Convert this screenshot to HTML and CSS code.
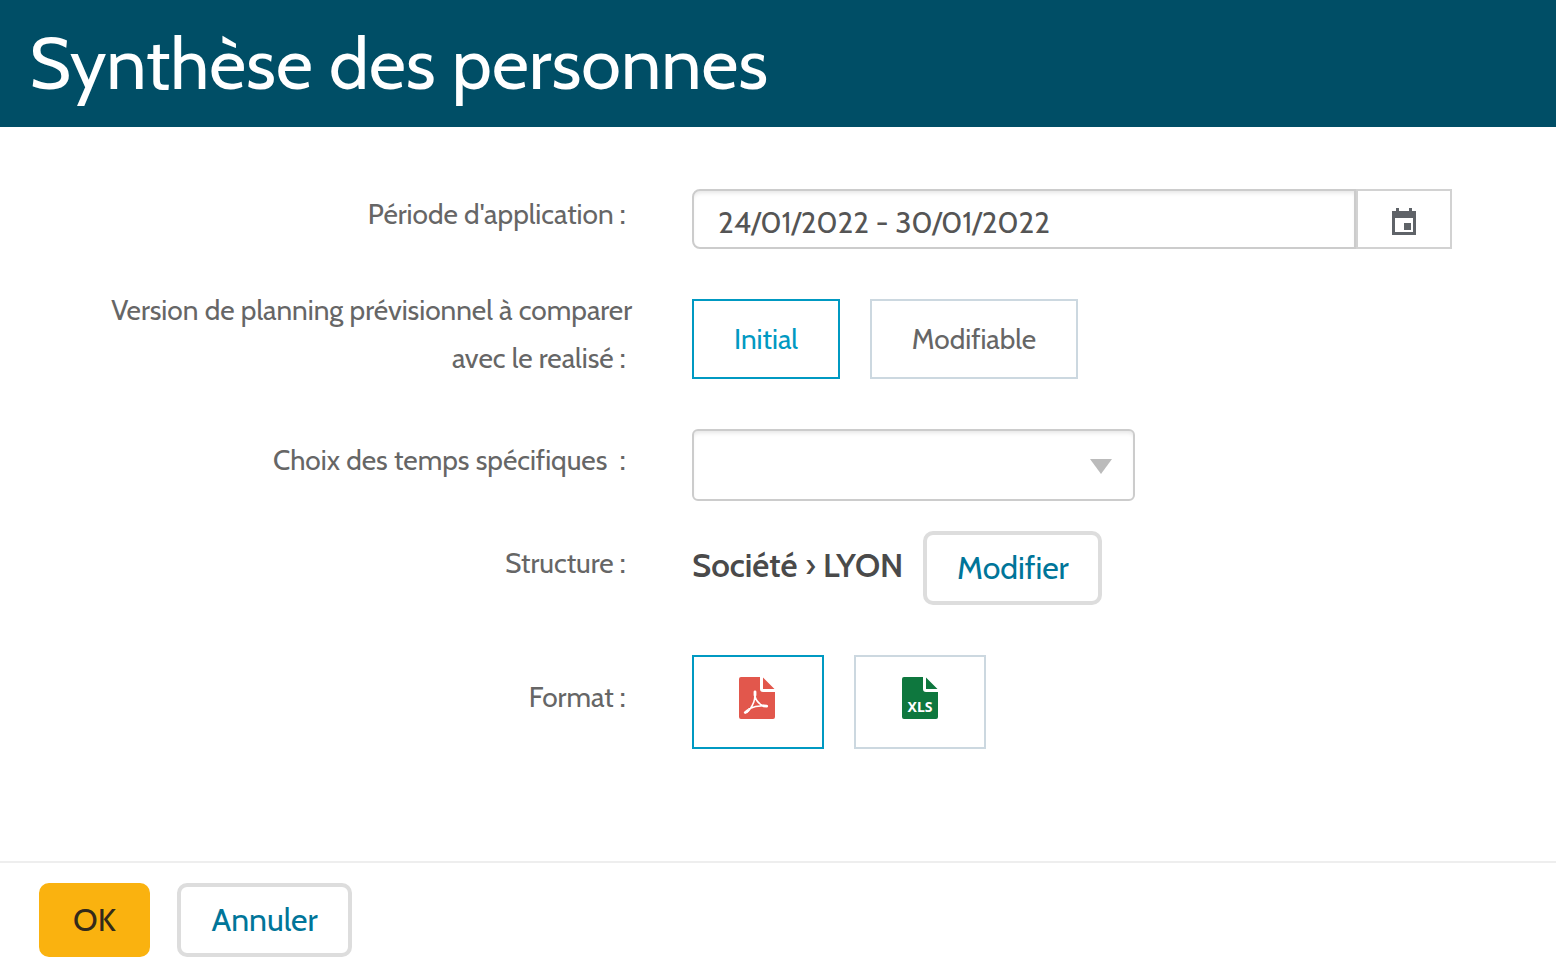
FILE: index.html
```
<!DOCTYPE html>
<html lang="fr">
<head>
<meta charset="utf-8">
<title>Synthèse des personnes</title>
<link rel="stylesheet" href="styles.css">
</head>
<body>
<header class="header"><h1 class="title">Synthèse des personnes</h1></header>
<form class="form">
  <main class="fields">
    <div class="row">
      <label class="label" for="period">Période d'application&nbsp;:&nbsp;</label>
      <div class="period">
        <input class="period-input" id="period" type="text" value="24/01/2022 - 30/01/2022">
        <button class="period-button" type="button" aria-label="Ouvrir le calendrier">
          <svg class="calendar-icon" viewBox="0 0 24 27" aria-hidden="true"><path fill="#5f6368" fill-rule="evenodd" d="M4 0h3v3h10V0h3v3h4v24H0V3h4zM3 10v14h18V10zM12 15h7v7h-7z"/></svg>
        </button>
      </div>
    </div>
    <div class="row row-version" role="radiogroup" aria-labelledby="version-label">
      <span class="label" id="version-label">Version de planning prévisionnel à comparer<br>avec le realisé&nbsp;:&nbsp;</span>
      <div class="choices">
        <label class="choice choice-initial"><input class="radio" type="radio" name="version" checked>Initial</label>
        <label class="choice choice-editable"><input class="radio" type="radio" name="version">Modifiable</label>
      </div>
    </div>
    <div class="row row-times">
      <label class="label" for="times">Choix des temps spécifiques&nbsp;&nbsp;:&nbsp;</label>
      <div class="select-box">
        <select class="select" id="times"><option></option></select>
        <svg class="arrow" viewBox="0 0 22 15" aria-hidden="true"><path fill="#bbb" d="M0 0h22L11 15z"/></svg>
      </div>
    </div>
    <div class="row row-structure">
      <span class="label">Structure&nbsp;:&nbsp;</span>
      <div class="structure">
        <strong class="structure-name">Société <span class="separator">›</span> LYON</strong>
        <button class="button button-edit" type="button">Modifier</button>
      </div>
    </div>
    <div class="row row-format" role="radiogroup" aria-labelledby="format-label">
      <span class="label" id="format-label">Format&nbsp;:&nbsp;</span>
      <div class="choices">
        <label class="choice choice-file choice-pdf"><input class="radio" type="radio" name="format" aria-label="PDF" checked>
          <svg class="file-icon" viewBox="0 0 36 42" aria-hidden="true">
            <path fill="#e2574c" d="M2 0h19v12q0 3 3 3h12v25q0 2-2 2H2q-2 0-2-2V2q0-2 2-2zM24 0.500L35.500 12H24z"/>
            <g fill="none" stroke="#fff" stroke-linejoin="round" stroke-linecap="round">
              <path stroke-width="1.600" d="M16 17c-.2 3 0 5-1.200 8-1.800 4.500-4 8-7 10.500M16 19c.6 3.500 3 6.500 5.500 8.300 1.800 1.200 4 1.700 6 2M10 31.800c4-1.800 9-2.900 14-3"/>
              <path stroke-width="2.800" d="M16 14.800v3.500M24.500 28.800l3.200.4M6.300 35.500l2.500-2"/>
            </g>
          </svg>
        </label>
        <label class="choice choice-file"><input class="radio" type="radio" name="format" aria-label="XLS">
          <svg class="file-icon" viewBox="0 0 36 42" aria-hidden="true">
            <path fill="#0e773e" d="M2 0h19v12q0 3 3 3h12v25q0 2-2 2H2q-2 0-2-2V2q0-2 2-2zM24 0.500L35.500 12H24z"/>
            <text class="file-text" x="18" y="35">XLS</text>
          </svg>
        </label>
      </div>
    </div>
  </main>
  <footer class="footer">
    <button class="button button-ok" type="submit">OK</button>
    <button class="button button-cancel" type="button">Annuler</button>
  </footer>
</form>
</body>
</html>
```
FILE: styles.css
```
* { box-sizing: border-box; }
body {
  margin: 0;
  min-height: 100vh;
  display: flex;
  flex-direction: column;
  background: #fff;
  color: #666;
  font-family: Cabin, Lato, sans-serif;
  font-size: 28px;
  line-height: 48px;
}
button, input, select { font: inherit; }
.header { background: #004e66; padding: 20px 29px 19px; }
.title { margin: 0; color: #fff; font-size: 72px; line-height: 88px; font-weight: 400; }
.form { flex: 1; display: flex; flex-direction: column; }
.fields { flex: 1; padding: 62px 104px 62px 0; }
.row { display: grid; grid-template-columns: 632fr 760fr; column-gap: 60px; align-items: center; }
.row-version { margin-top: 37px; }
.row-times { margin-top: 37px; }
.row-structure { margin-top: 30px; }
.row-format { margin-top: 50px; }
.label { padding-bottom: 10px; text-align: right; }
.period { display: flex; height: 60px; }
.period-input {
  flex: 1;
  min-width: 0;
  padding: 8px 24px 0;
  border: 2px solid #ccc;
  border-radius: 8px 0 0 8px;
  box-shadow: inset 0 4px 4px -2px rgba(0, 0, 0, 0.1);
  color: #555;
  font-size: 30px;
}
.period-button {
  width: 96px;
  padding: 4px 0 0;
  display: flex;
  align-items: center;
  justify-content: center;
  border: 2px solid #d2d2d2;
  background: #fff;
}
.calendar-icon { width: 24px; height: 27px; }
.choices { display: flex; gap: 30px; }
.choice {
  display: flex;
  align-items: center;
  justify-content: center;
  height: 80px;
  border: 2px solid #ccd8e0;
}
.choice:has(.radio:checked) { border-color: #0099c2; color: #0099c2; }
.radio { position: absolute; opacity: 0; margin: 0; }
.choice-initial { width: 148px; }
.choice-editable { width: 208px; }
.choice-file { width: 132px; height: 94px; padding-bottom: 8px; }
.choice-pdf { padding-right: 2px; }
.file-icon { width: 36px; height: 42px; }
.file-text { fill: #fff; font: 700 14px "Noto Sans", sans-serif; text-anchor: middle; }
.select-box { position: relative; width: 443px; }
.select {
  display: block;
  width: 100%;
  height: 72px;
  appearance: none;
  border: 2px solid #ccc;
  border-radius: 6px;
  background: #fff;
  box-shadow: inset 0 4px 4px -2px rgba(0, 0, 0, 0.1);
}
.arrow { position: absolute; right: 23px; top: 30px; width: 22px; height: 15px; pointer-events: none; }
.structure { display: flex; align-items: center; gap: 20px; }
.structure-name { padding-bottom: 6px; color: #4a4a4a; font-size: 33px; font-weight: 600; white-space: nowrap; }
.separator { font-weight: 400; }
.button {
  height: 74px;
  padding: 0;
  border: 4px solid #ddd;
  border-radius: 10px;
  background: #fff;
  color: #007599;
  font-size: 32px;
  font-weight: 400;
}
.button-edit { width: 179px; }
.footer { display: flex; gap: 27px; padding: 20px 39px 22px; border-top: 2px solid #eee; }
.button-ok { width: 111px; border-color: #fab20f; background: #fab20f; color: #332a1a; }
.button-cancel { width: 175px; }
```
